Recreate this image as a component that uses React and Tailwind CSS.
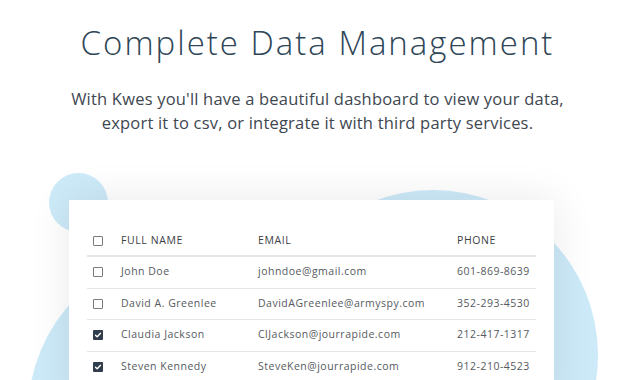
import React from "react";

const rows = [
  { name: "John Doe", email: "johndoe@gmail.com", phone: "601-869-8639", checked: false },
  { name: "David A. Greenlee", email: "DavidAGreenlee@armyspy.com", phone: "352-293-4530", checked: false },
  { name: "Claudia Jackson", email: "ClJackson@jourrapide.com", phone: "212-417-1317", checked: true },
  { name: "Steven Kennedy", email: "SteveKen@jourrapide.com", phone: "912-210-4523", checked: true },
];

function Box({ checked }) {
  if (checked) {
    return (
      <span className="flex h-[10px] w-[10px] items-center justify-center rounded-[1px] bg-[#2f3d4c]">
        <svg width="8" height="8" viewBox="0 0 8 8">
          <path d="M1.5 4.2 L3.2 5.8 L6.5 2.3" fill="none" stroke="#fff" strokeWidth="1.4" strokeLinecap="round" strokeLinejoin="round" />
        </svg>
      </span>
    );
  }
  return <span className="block h-[10px] w-[10px] rounded-[1px] border border-[#7a7a7a] bg-white" />;
}

export default function App() {
  return (
    <div className="relative h-[380px] w-[635px] overflow-hidden bg-white" style={{ fontFamily: '"Open Sans", "Liberation Sans", sans-serif' }}>
      <div className="absolute left-[268px] top-[190px] h-[330px] w-[330px] rounded-full bg-[#cdeaf9]" />
      <div className="absolute left-[28px] top-[249px] h-[330px] w-[330px] rounded-full bg-[#cdeaf9]" />
      <div className="absolute left-[49px] top-[173px] h-[59px] w-[59px] rounded-full bg-[#cdeaf9]" />

      <div className="relative flex flex-col items-center pt-[22px]">
        <h1 className="text-[33px] font-light leading-[42px] tracking-[2px] text-[#2e4657]">Complete Data Management</h1>
        <p className="mt-[23px] text-center text-[16.5px] leading-[24px] tracking-[0.2px] text-[#3e4750]">
          With Kwes you'll have a beautiful dashboard to view your data,
          <br />
          export it to csv, or integrate it with third party services.
        </p>
      </div>

      <div className="relative ml-[69px] mt-[65px] w-[485px] bg-white px-[18px] pt-[27px] pb-[20px] shadow-[0_0_40px_rgba(0,0,0,0.09)]">
        <div className="grid h-[30px] grid-cols-[34px_137px_199px_1fr] items-center border-b-2 border-[#e6e6e6] text-[10.5px] uppercase tracking-[0.6px] text-[#3b4046]">
          <div className="pl-[6px]"><Box checked={false} /></div>
          <div>Full Name</div>
          <div>Email</div>
          <div>Phone</div>
        </div>
        {rows.map((r) => (
          <div key={r.name} className="grid h-[31.5px] grid-cols-[34px_137px_199px_1fr] items-center border-b border-[#e6e6e6] text-[10.5px] tracking-[0.5px] text-[#555a60]">
            <div className="pl-[6px]"><Box checked={r.checked} /></div>
            <div>{r.name}</div>
            <div>{r.email}</div>
            <div>{r.phone}</div>
          </div>
        ))}
      </div>
    </div>
  );
}
